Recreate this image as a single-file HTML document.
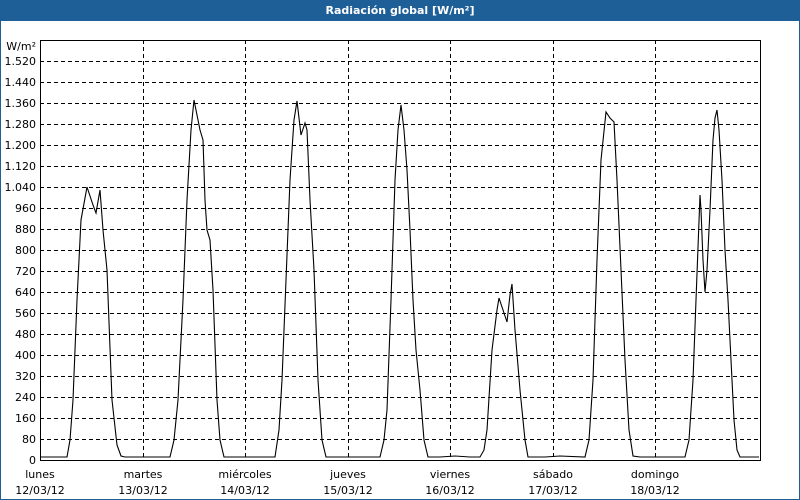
<!DOCTYPE html>
<html><head><meta charset="utf-8"><style>
html,body{margin:0;padding:0;background:#fff;}
body{width:800px;height:500px;position:relative;overflow:hidden;font-family:"DejaVu Sans","Liberation Sans",sans-serif;}
.frame{position:absolute;left:0;top:0;width:798px;height:498px;border:1px solid #1f5f98;}
.title{position:absolute;left:0;top:0;width:800px;height:21px;background:#1f5f98;color:#fff;font-weight:bold;font-size:11px;line-height:21px;text-align:center;}
svg{position:absolute;left:0;top:0;}
svg text{font-family:"DejaVu Sans","Liberation Sans",sans-serif;font-size:11px;fill:#000;}
</style></head><body>
<div class="frame"></div>
<div class="title">Radiación global [W/m²]</div>
<svg width="800" height="500" viewBox="0 0 800 500">
<g stroke="#000" stroke-width="1" stroke-dasharray="4,3" fill="none" shape-rendering="crispEdges">
<line x1="40" y1="439.5" x2="760" y2="439.5"/><line x1="40" y1="418.5" x2="760" y2="418.5"/><line x1="40" y1="397.5" x2="760" y2="397.5"/><line x1="40" y1="376.5" x2="760" y2="376.5"/><line x1="40" y1="355.5" x2="760" y2="355.5"/><line x1="40" y1="334.5" x2="760" y2="334.5"/><line x1="40" y1="313.5" x2="760" y2="313.5"/><line x1="40" y1="292.5" x2="760" y2="292.5"/><line x1="40" y1="271.5" x2="760" y2="271.5"/><line x1="40" y1="250.5" x2="760" y2="250.5"/><line x1="40" y1="229.5" x2="760" y2="229.5"/><line x1="40" y1="208.5" x2="760" y2="208.5"/><line x1="40" y1="187.5" x2="760" y2="187.5"/><line x1="40" y1="166.5" x2="760" y2="166.5"/><line x1="40" y1="145.5" x2="760" y2="145.5"/><line x1="40" y1="124.5" x2="760" y2="124.5"/><line x1="40" y1="103.5" x2="760" y2="103.5"/><line x1="40" y1="82.5" x2="760" y2="82.5"/><line x1="40" y1="61.5" x2="760" y2="61.5"/>
<line x1="143.5" y1="40" x2="143.5" y2="460"/><line x1="245.5" y1="40" x2="245.5" y2="460"/><line x1="348.5" y1="40" x2="348.5" y2="460"/><line x1="450.5" y1="40" x2="450.5" y2="460"/><line x1="553.5" y1="40" x2="553.5" y2="460"/><line x1="655.5" y1="40" x2="655.5" y2="460"/>
</g>
<rect x="40.5" y="40.5" width="720" height="420" fill="none" stroke="#000" shape-rendering="crispEdges"/>
<polyline fill="none" stroke="#000" stroke-width="1.1" points="
41,457 67,457 70,440 73,400 77,300 81,220 87,187 93,205 96,213 100,190 103,230 107,270 112,400 117,445 121,456 125,457
170,457 174,440 178,400 183,300 187,200 191,130 194,100 200,130 203,140 205,200 207,230 210,240 213,290 217,400 220,440 224,457
275,457 279,430 282,380 286,280 290,180 294,120 297,101 301,135 305,123 307,130 310,200 314,270 318,380 322,440 326,457
380,457 384,440 387,410 391,300 395,180 398,130 401,105 404,130 407,170 410,230 413,300 416,350 420,390 424,440 428,457
440,457 455,456 470,457 480,457 484,450 487,430 492,350 497,310 499,298 503,310 507,322 510,295 512,284 515,330 520,390 525,440 528,457
545,457 560,456 585,457 589,440 593,380 597,260 601,160 606,112 610,118 614,122 617,180 621,270 625,360 629,430 633,456
640,457 685,457 689,440 693,380 696,300 700,195 701,210 703,260 705,292 707,270 710,210 713,140 715,118 717,110 719,130 722,180 725,250 728,300 731,360 734,420 737,450 740,457 759,457"/>
<g text-anchor="end">
<text x="36" y="50">W/m²</text>
<text x="36" y="65">1.520</text><text x="36" y="86">1.440</text><text x="36" y="107">1.360</text><text x="36" y="128">1.280</text><text x="36" y="149">1.200</text><text x="36" y="170">1.120</text><text x="36" y="191">1.040</text><text x="36" y="212">960</text><text x="36" y="233">880</text><text x="36" y="254">800</text><text x="36" y="275">720</text><text x="36" y="296">640</text><text x="36" y="317">560</text><text x="36" y="338">480</text><text x="36" y="359">400</text><text x="36" y="380">320</text><text x="36" y="401">240</text><text x="36" y="422">160</text><text x="36" y="443">80</text><text x="36" y="464">0</text>
</g>
<g text-anchor="middle">
<text x="40" y="478">lunes</text><text x="40" y="494">12/03/12</text>
<text x="143" y="478">martes</text><text x="143" y="494">13/03/12</text>
<text x="245" y="478">miércoles</text><text x="245" y="494">14/03/12</text>
<text x="348" y="478">jueves</text><text x="348" y="494">15/03/12</text>
<text x="450" y="478">viernes</text><text x="450" y="494">16/03/12</text>
<text x="553" y="478">sábado</text><text x="553" y="494">17/03/12</text>
<text x="655" y="478">domingo</text><text x="655" y="494">18/03/12</text>
</g>
</svg>
</body></html>
